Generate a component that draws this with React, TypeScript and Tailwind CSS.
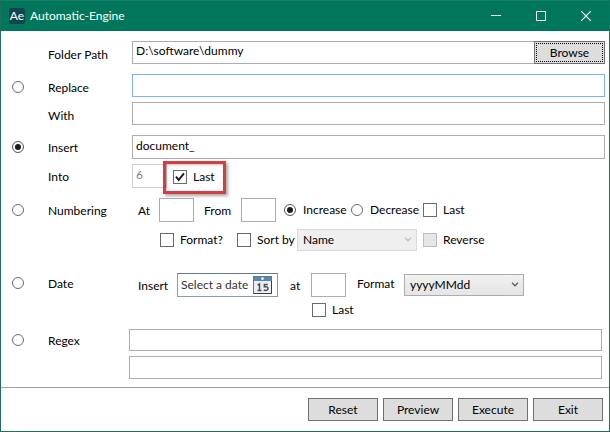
import React from "react";

type BoxProps = {
  id: string;
  label?: string;
  value?: string;
  disabled?: boolean;
  className?: string;
};

function TextBox({ id, label, value, disabled, className = "" }: BoxProps) {
  return (
    <input
      id={id}
      type="text"
      aria-label={label}
      defaultValue={value}
      disabled={disabled}
      className={`block min-w-0 border border-[#abadb3] bg-white px-[3px] pb-1 text-[12px] leading-4 outline-none disabled:border-[#d0d1d4] disabled:text-[#808080] ${className}`}
    />
  );
}

type ToggleProps = {
  children?: React.ReactNode;
  name?: string;
  checked?: boolean;
  disabled?: boolean;
  label?: string;
  className?: string;
};

function Radio({ children, name, checked, label, className = "" }: ToggleProps) {
  return (
    <label className={`flex items-center gap-[7px] whitespace-nowrap ${className}`}>
      <input
        type="radio"
        name={name}
        aria-label={label}
        defaultChecked={checked}
        className="grid size-3 shrink-0 appearance-none place-items-center rounded-full border border-[#6b6b6b] bg-white before:size-1.5 before:rounded-full checked:border-[#555] checked:before:bg-[#1c1c1c]"
      />
      {children}
    </label>
  );
}

function Check({ children, checked, disabled, className = "" }: ToggleProps) {
  return (
    <label className={`relative flex items-center gap-1.5 whitespace-nowrap ${className}`}>
      <input
        type="checkbox"
        defaultChecked={checked}
        disabled={disabled}
        className="peer size-3.5 shrink-0 appearance-none border border-[#6b6b6b] bg-white disabled:border-[#bcbcbc] disabled:bg-[#e6e6e6]"
      />
      <svg
        viewBox="0 0 14 14"
        className="pointer-events-none absolute left-0 hidden size-3.5 peer-checked:block"
        aria-hidden="true"
      >
        <path d="M3 6.6 5.7 10 11 3.4" fill="none" stroke="#1c1c1c" strokeWidth="2" />
      </svg>
      {children}
    </label>
  );
}

type SelectProps = { id: string; label?: string; option: string; disabled?: boolean };

function Select({ id, label, option, disabled }: SelectProps) {
  return (
    <div className="relative w-[120px] shrink-0">
      <select
        id={id}
        aria-label={label}
        disabled={disabled}
        className="peer block h-[22px] w-full appearance-none border border-[#acacac] bg-linear-to-b from-[#f0f0f0] to-[#e5e5e5] px-[5px] text-[12px] leading-5 text-black opacity-100 outline-none disabled:border-[#d9d9d9] disabled:from-[#efefef] disabled:to-[#efefef]"
      >
        <option>{option}</option>
      </select>
      <svg
        viewBox="0 0 8 5"
        className="pointer-events-none absolute right-[5px] top-2 h-[5px] w-2 text-[#606060] peer-disabled:text-[#bfbfbf]"
        aria-hidden="true"
      >
        <path d="M1 .8 4 3.8 7 .8" fill="none" stroke="currentColor" strokeWidth="1.3" />
      </svg>
    </div>
  );
}

function CalendarIcon() {
  return (
    <svg viewBox="0 0 20 18" className="h-[18px] w-5" aria-hidden="true">
      <rect x=".5" y=".5" width="18" height="17" fill="#eceef1" stroke="#6b7280" />
      <rect x="1" y="1" width="17" height="4" fill="#5189b8" />
      <circle cx="9.5" cy="2.6" r="1.3" fill="#fff" />
      <path d="M1 17.5h17.5V5" fill="none" stroke="#3b3f45" />
      <path
        d="M4.6 9 6.5 8V14.5M4.5 14.5H8.5M14.8 8.5H11.4V10.9C13.5 10.3 15 11 15 12.4 15 14.6 12.2 15 10.8 13.9"
        fill="none"
        stroke="#4a4f57"
        strokeWidth="1.5"
      />
    </svg>
  );
}

const actions = ["Reset", "Preview", "Execute", "Exit"];

export default function App() {
  return (
    <div className="flex min-h-screen flex-col border border-t-0 border-[#1f6f5c] bg-white font-[Lato,'Open_Sans',sans-serif] text-[12px] leading-4 text-black">
      <header className="flex h-[31px] items-center border-t border-[#1a806a] bg-[#00775b] pl-2 text-white">
        <span className="grid size-4 place-items-center rounded-xs bg-[#12464a] text-[12px] leading-4">Ae</span>
        <h1 className="ml-[5px] flex-1">Automatic-Engine</h1>
        <button type="button" aria-label="Minimize" className="grid h-full w-[45px] place-items-center">
          <svg viewBox="0 0 10 10" className="size-2.5"><path d="M0 4.5h10" stroke="#fff" /></svg>
        </button>
        <button type="button" aria-label="Maximize" className="grid h-full w-[45px] place-items-center">
          <svg viewBox="0 0 10 10" className="size-2.5"><path d="M.5.5h9v9h-9z" fill="none" stroke="#fff" /></svg>
        </button>
        <button type="button" aria-label="Close" className="grid h-full w-[46px] place-items-center">
          <svg viewBox="0 0 10 10" className="size-2.5"><path d="M.3.3 9.7 9.7M9.7.3.3 9.7" stroke="#fff" strokeWidth="1.2" /></svg>
        </button>
      </header>

      <main className="flex-1 pb-2 pl-[11px] pr-1 pt-2.5">
        <div className="flex items-center pl-9">
          <label htmlFor="folder" className="w-[84px] shrink-0 pt-1">Folder Path</label>
          <TextBox id="folder" value="D:\software\dummy" className="h-[23px] flex-1 border-r-0" />
          <button type="button" className="h-[23px] w-[71px] border border-[#707070] bg-[#dddddd] p-px">
            <span className="block h-full border border-dotted border-black leading-[18px]">Browse</span>
          </button>
        </div>

        <div className="mt-2.5 flex items-center">
          <Radio name="mode" label="Replace" className="w-9 shrink-0 pt-[3px]" />
          <label htmlFor="replace" className="w-[84px] shrink-0 pt-1">Replace</label>
          <TextBox id="replace" className="h-[23px] flex-1 border-[#7eb4ea]!" />
        </div>
        <div className="mt-[5px] flex items-center pl-9">
          <label htmlFor="with" className="w-[84px] shrink-0 pt-1">With</label>
          <TextBox id="with" className="h-[23px] flex-1" />
        </div>

        <div className="mt-2.5 flex items-center">
          <Radio name="mode" label="Insert" checked className="w-9 shrink-0" />
          <label htmlFor="insert" className="w-[84px] shrink-0 pt-0.5">Insert</label>
          <TextBox id="insert" value="document_" className="h-6 flex-1" />
        </div>
        <div className="mt-[5px] flex items-center pl-9">
          <label htmlFor="into" className="w-[84px] shrink-0 pt-0.5">Into</label>
          <TextBox id="into" value="6" disabled className="h-6 w-[35px]" />
          <div className="relative ml-1.5 pt-0.5">
            <Check checked>Last</Check>
            <span className="pointer-events-none absolute -bottom-[9px] -left-2.5 -right-[11px] -top-1.5 border-3 border-[#d13f43] shadow-[2px_2px_3px_rgba(0,0,0,0.35),inset_1px_1px_3px_rgba(0,0,0,0.25)]" />
          </div>
        </div>

        <div className="mt-2.5 flex items-center">
          <Radio name="mode" label="Numbering" className="w-9 shrink-0" />
          <span className="w-[90px] shrink-0 pt-0.5">Numbering</span>
          <label htmlFor="num-at" className="w-[21px] shrink-0 pt-0.5">At</label>
          <TextBox id="num-at" className="h-6 w-[35px]" />
          <label htmlFor="num-from" className="ml-2.5 w-[37px] shrink-0 pt-0.5">From</label>
          <TextBox id="num-from" className="h-6 w-[35px]" />
          <Radio name="direction" checked className="ml-2 w-[67px]">Increase</Radio>
          <Radio name="direction" className="w-[72px]">Decrease</Radio>
          <Check>Last</Check>
        </div>
        <div className="mt-[7px] flex items-center pl-[148px]">
          <Check className="w-[77px]">Format?</Check>
          <Check className="w-[60px]">Sort by</Check>
          <Select id="sort" label="Sort by" option="Name" disabled />
          <Check disabled className="ml-1.5">Reverse</Check>
        </div>

        <div className="mt-[22px] flex items-center">
          <Radio name="mode" label="Date" className="w-9 shrink-0 pb-1" />
          <span className="w-[90px] shrink-0 pb-0.5">Date</span>
          <label htmlFor="date" className="w-[39px] shrink-0 pt-0.5">Insert</label>
          <div className="flex h-6 w-[101px] shrink-0 items-center border border-[#8a9ba8] border-t-[#687b8b] pl-[3px] pr-1">
            <input
              id="date"
              type="text"
              placeholder="Select a date"
              className="w-[72px] flex-none bg-transparent text-[12px] leading-4 outline-none placeholder:text-[#333]"
            />
            <button type="button" aria-label="Show calendar" className="w-5 shrink-0">
              <CalendarIcon />
            </button>
          </div>
          <label htmlFor="date-at" className="ml-3 w-[21px] shrink-0 pt-0.5">at</label>
          <TextBox id="date-at" className="h-6 w-[35px]" />
          <label htmlFor="date-format" className="ml-[11px] w-[47px] shrink-0 pb-0.5">Format</label>
          <Select id="date-format" option="yyyyMMdd" />
        </div>
        <div className="mt-[5px] flex pl-[300px]">
          <Check>Last</Check>
        </div>

        <div className="mt-[11px] flex items-start pr-[3px]">
          <Radio name="mode" label="Regex" className="h-[22px] w-9 shrink-0" />
          <label htmlFor="regex" className="w-[81px] shrink-0 leading-6">Regex</label>
          <div className="grid flex-1 gap-[5px]">
            <TextBox id="regex" className="h-[22px] w-full" />
            <TextBox id="regex-to" label="Regex replacement" className="h-[23px] w-full" />
          </div>
        </div>
      </main>

      <footer className="flex justify-end gap-[5px] border-t border-[#a0a0a0] pb-2.5 pr-1.5 pt-2.5">
        {actions.map((name) => (
          <button key={name} type="button" className="h-[23px] w-[70px] border border-[#707070] bg-[#dddddd]">
            {name}
          </button>
        ))}
      </footer>
    </div>
  );
}
